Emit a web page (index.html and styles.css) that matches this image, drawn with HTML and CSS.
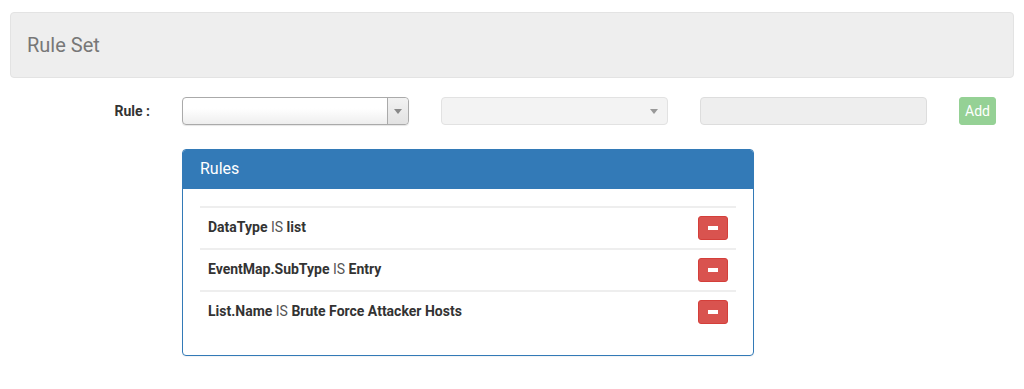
FILE: index.html
```html
<!DOCTYPE html>
<html lang="en">
<head>
    <meta charset="UTF-8">
    <meta name="viewport" content="width=device-width, initial-scale=1.0">
    <title>Rule Set</title>
    <link rel="stylesheet" href="styles.css">
</head>
<body>
    <div class="page">
        <div class="page-header">
            <h3>Rule Set</h3>
        </div>

        <div class="form-row">
            <label class="form-label">Rule :</label>
            <div class="chosen">
                <span class="chosen-text"></span>
                <span class="chosen-arrow"><span class="caret"></span></span>
            </div>
            <div class="chosen disabled">
                <span class="chosen-text"></span>
                <span class="chosen-arrow"><span class="caret"></span></span>
            </div>
            <input class="text-input" type="text" disabled>
            <button class="btn-add" disabled>Add</button>
        </div>

        <div class="panel">
            <div class="panel-heading">Rules</div>
            <div class="panel-body">
                <table class="rules">
                    <tr>
                        <td><b>DataType</b> IS <b>list</b></td>
                        <td class="actions"><button class="btn-remove"><span class="minus"></span></button></td>
                    </tr>
                    <tr>
                        <td><b>EventMap.SubType</b> IS <b>Entry</b></td>
                        <td class="actions"><button class="btn-remove"><span class="minus"></span></button></td>
                    </tr>
                    <tr>
                        <td><b>List.Name</b> IS <b>Brute Force Attacker Hosts</b></td>
                        <td class="actions"><button class="btn-remove"><span class="minus"></span></button></td>
                    </tr>
                </table>
            </div>
        </div>
    </div>
</body>
</html>
```

FILE: styles.css
```css
body {
    margin: 0;
    font-family: Roboto, 'Liberation Sans', Arial, sans-serif;
    font-size: 14px;
    color: #333;
    background-color: #fff;
}
.page {
    padding: 12px 10px;
}
.page-header {
    background-color: #eeeeee;
    border: 1px solid #e3e3e3;
    border-radius: 4px;
    height: 64px;
    display: flex;
    align-items: center;
    padding-left: 16px;
}
.page-header h3 {
    margin: 0;
    font-size: 20px;
    font-weight: 400;
    color: #777;
}
.form-row {
    display: flex;
    align-items: center;
    margin-top: 19px;
    height: 28px;
}
.form-label {
    width: 140px;
    margin-right: 32px;
    text-align: right;
    font-weight: 700;
    color: #333;
}
.chosen {
    box-sizing: border-box;
    width: 227px;
    height: 28px;
    margin-right: 32px;
    display: flex;
    border: 1px solid #aaa;
    border-radius: 4px;
    background: linear-gradient(#fff 40%, #eee 100%);
    box-shadow: 0 1px 1px rgba(0, 0, 0, 0.1);
}
.chosen-text {
    flex: 1;
}
.chosen-arrow {
    width: 20px;
    border-left: 1px solid #aaa;
    border-radius: 0 4px 4px 0;
    background: linear-gradient(#f2f2f2, #e2e2e2);
    display: flex;
    align-items: center;
    justify-content: center;
}
.caret {
    width: 0;
    height: 0;
    border-left: 4px solid transparent;
    border-right: 4px solid transparent;
    border-top: 5px solid #888;
}
.chosen.disabled {
    border-color: #e2e2e2;
    background: #f3f3f3;
    box-shadow: none;
}
.chosen.disabled .chosen-arrow {
    border-left: none;
    background: none;
    width: 26px;
}
.chosen.disabled .caret {
    border-top-color: #999;
}
.text-input {
    box-sizing: border-box;
    width: 227px;
    height: 28px;
    margin: 0 32px 0 0;
    border: 1px solid #ddd;
    border-radius: 4px;
    background-color: #eeeeee;
}
.btn-add {
    height: 28px;
    width: 37px;
    padding: 0;
    border: 1px solid #95d195;
    border-radius: 3px;
    background-color: #95d195;
    color: #fff;
    font-family: inherit;
    font-size: 14px;
}
.panel {
    width: 572px;
    box-sizing: border-box;
    margin: 24px 0 0 172px;
    border: 1px solid #337ab7;
    border-radius: 4px;
    box-shadow: 0 1px 1px rgba(0, 0, 0, 0.05);
}
.panel-heading {
    background-color: #337ab7;
    color: #fff;
    font-size: 16px;
    height: 39px;
    line-height: 38px;
    padding-left: 17px;
    border-radius: 3px 3px 0 0;
}
.panel-body {
    padding: 17px 17px 23px 17px;
}
.rules {
    width: 100%;
    border-collapse: collapse;
}
.rules td {
    height: 37px;
    padding: 0 8px 3px 8px;
    border-top: 2px solid #eee;
    color: #555;
}
.rules b {
    color: #333;
}
.rules .actions {
    text-align: right;
    padding-bottom: 1px;
}
.btn-remove {
    width: 30px;
    height: 24px;
    padding: 0;
    border: 1px solid #d43f3a;
    border-radius: 3px;
    background-color: #d9534f;
    display: inline-flex;
    align-items: center;
    justify-content: center;
    vertical-align: middle;
}
.minus {
    width: 10px;
    height: 4px;
    background-color: #fff;
}
```
